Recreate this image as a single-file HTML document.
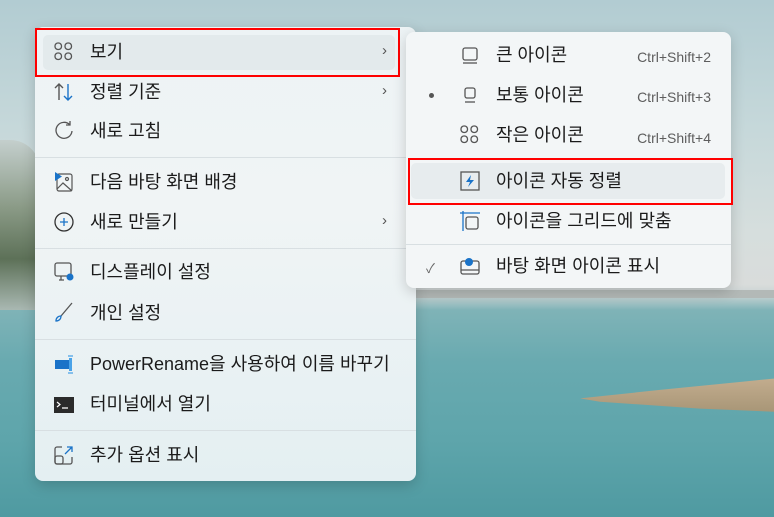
<!DOCTYPE html>
<html><head><meta charset="utf-8"><style>
*{margin:0;padding:0;box-sizing:border-box}
body{width:774px;height:517px;overflow:hidden;position:relative;font-family:"Liberation Sans","Noto Sans CJK KR",sans-serif;
background:linear-gradient(180deg,#b2ccd2 0%,#c6d8da 25%,#d6dedd 45%,#d9dcdb 55%,#c9d3d3 57%,#7fb3b7 60%,#69aab0 70%,#5ea5ab 85%,#4f9aa1 100%);}
.abs{position:absolute}
.menu{position:absolute;border-radius:8px;box-shadow:0 4px 14px rgba(0,0,0,.18);}
.m1{left:35px;top:27px;width:381px;height:454px;background:linear-gradient(180deg,#edf3f5,#f0f4f5 40%,#e8f1f3 80%,#e4eff2);}
.m2{left:406px;top:32px;width:325px;height:256px;background:#f3f6f7;}
.it{position:absolute;font-size:18px;color:#1b1b1b;line-height:20px;white-space:nowrap}
.sep{position:absolute;height:1px;background:#d8dfe2}
.sc{position:absolute;font-size:14px;color:#5d5d5d;line-height:16px;right:63px;text-align:right}
.ic{position:absolute}
.chev{position:absolute;font-size:15px;color:#555}
.red{position:absolute;border:2.5px solid #f00}
</style></head><body>
<div class="abs" style="left:0;top:140px;width:40px;height:170px;background:linear-gradient(180deg,#c4cfcd,#8a9a86 40%,#5d7158 70%,#a9b8b2);border-radius:0 30px 0 0"></div>
<div class="abs" style="left:400px;top:290px;width:374px;height:8px;background:#b3b9b7"></div>
<div class="abs" style="left:580px;top:378px;width:200px;height:34px;background:linear-gradient(180deg,#c3ad8e,#a89677);clip-path:polygon(0 60%,40% 35%,100% 0,100% 100%,60% 90%,10% 70%)"></div>

<div class="menu m1">
 <div class="abs" style="left:8px;top:8px;width:352px;height:35px;background:#e3eaec;border-radius:5px"></div>
 <div class="sep" style="left:0;top:130px;width:381px"></div>
 <div class="sep" style="left:0;top:221px;width:381px"></div>
 <div class="sep" style="left:0;top:312px;width:381px"></div>
 <div class="sep" style="left:0;top:403px;width:381px"></div>
</div>
<div class="red" style="left:35px;top:28px;width:365px;height:49px"></div>

<svg class="ic" style="left:52px;top:40px" width="24" height="24" fill="none" stroke="#555" stroke-width="1.3"><rect x="3" y="3" width="6.5" height="6.5" rx="3"/><rect x="13" y="3" width="6.5" height="6.5" rx="3"/><rect x="3" y="13" width="6.5" height="6.5" rx="3"/><rect x="13" y="13" width="6.5" height="6.5" rx="3"/></svg>
<div class="it" style="left:90px;top:42px">보기</div><div class="chev" style="left:382px;top:42px">›</div>
<svg class="ic" style="left:52px;top:80px" width="24" height="24" fill="none" stroke-width="1.4"><path d="M7 20V4M3 8l4-4 4 4" stroke="#555"/><path d="M16 4v16M12 16l4 4 4-4" stroke="#1a73c8"/></svg>
<div class="it" style="left:90px;top:82px">정렬 기준</div><div class="chev" style="left:382px;top:82px">›</div>
<svg class="ic" style="left:52px;top:119px" width="24" height="24" fill="none" stroke="#555" stroke-width="1.3"><path d="M18 6A8 8 0 1 0 20 12"/><path d="M18 2v4h-4"/></svg>
<div class="it" style="left:90px;top:121px">새로 고침</div>
<svg class="ic" style="left:52px;top:170px" width="24" height="24" fill="none" stroke="#555" stroke-width="1.2"><rect x="5" y="4" width="15" height="17" rx="2"/><path d="M5 19l6-6 9 8"/><circle cx="15" cy="9" r="1.5"/><path d="M3 2v9l7-4.5z" fill="#1a73c8" stroke="none"/></svg>
<div class="it" style="left:90px;top:172px">다음 바탕 화면 배경</div>
<svg class="ic" style="left:52px;top:210px" width="24" height="24" fill="none" stroke-width="1.3"><circle cx="12" cy="12" r="9" stroke="#333"/><path d="M12 8v8M8 12h8" stroke="#1a73c8"/></svg>
<div class="it" style="left:90px;top:212px">새로 만들기</div><div class="chev" style="left:382px;top:212px">›</div>
<svg class="ic" style="left:52px;top:260px" width="26" height="24" fill="none" stroke="#555" stroke-width="1.3"><rect x="3" y="3" width="16" height="13" rx="2"/><path d="M7 20h5M9 16v4"/><circle cx="18" cy="17" r="3.5" fill="#1a73c8" stroke="none"/></svg>
<div class="it" style="left:90px;top:262px">디스플레이 설정</div>
<svg class="ic" style="left:52px;top:300px" width="24" height="24" fill="none" stroke-width="1.3"><path d="M20 3L9 16" stroke="#555"/><path d="M9 16c-3 0-5 2-5 5 3 0 5-2 5-5z" stroke="#1a73c8"/></svg>
<div class="it" style="left:90px;top:303px">개인 설정</div>
<svg class="ic" style="left:52px;top:352px" width="24" height="24"><rect x="3" y="8" width="15" height="9" fill="#1a73c8"/><rect x="17" y="6" width="3" height="13" fill="#4aa3e8"/><path d="M16 4h5M16 21h5" stroke="#4aa3e8" stroke-width="1.3"/></svg>
<div class="it" style="left:90px;top:354px">PowerRename을 사용하여 이름 바꾸기</div>
<svg class="ic" style="left:52px;top:393px" width="24" height="24"><rect x="2" y="4" width="20" height="16" fill="#2b2b2b"/><path d="M5 9l3 2.5L5 14M10 15h6" stroke="#fff" stroke-width="1.2" fill="none"/></svg>
<div class="it" style="left:90px;top:394px">터미널에서 열기</div>
<svg class="ic" style="left:52px;top:443px" width="24" height="24" fill="none" stroke-width="1.3"><path d="M10 4H5a2 2 0 0 0-2 2v13a2 2 0 0 0 2 2h13a2 2 0 0 0 2-2v-5" stroke="#555"/><rect x="3" y="13" width="8" height="8" rx="2" stroke="#555"/><path d="M13 11l7-7M15 4h5v5" stroke="#1a73c8"/></svg>
<div class="it" style="left:90px;top:445px">추가 옵션 표시</div>

<div class="menu m2">
 <div class="abs" style="left:5px;top:131px;width:314px;height:36px;background:#e7ecee;border-radius:5px"></div>
 <div class="sep" style="left:0;top:212px;width:325px"></div>
</div>
<div class="red" style="left:408px;top:158px;width:325px;height:47px"></div>

<svg class="ic" style="left:458px;top:43px" width="24" height="24" fill="none" stroke="#555" stroke-width="1.3"><rect x="5" y="5" width="14" height="12" rx="2"/><path d="M5 20h14"/></svg>
<div class="it" style="left:496px;top:45px">큰 아이콘</div><div class="sc" style="top:49px">Ctrl+Shift+2</div>
<div class="abs" style="left:429px;top:93px;width:5px;height:5px;border-radius:50%;background:#555"></div>
<svg class="ic" style="left:458px;top:83px" width="24" height="24" fill="none" stroke="#555" stroke-width="1.3"><rect x="7" y="5" width="10" height="10" rx="2"/><path d="M7 19h10"/></svg>
<div class="it" style="left:496px;top:85px">보통 아이콘</div><div class="sc" style="top:89px">Ctrl+Shift+3</div>
<svg class="ic" style="left:458px;top:123px" width="24" height="24" fill="none" stroke="#555" stroke-width="1.3"><rect x="3" y="3" width="6.5" height="6.5" rx="3"/><rect x="13" y="3" width="6.5" height="6.5" rx="3"/><rect x="3" y="13" width="6.5" height="6.5" rx="3"/><rect x="13" y="13" width="6.5" height="6.5" rx="3"/></svg>
<div class="it" style="left:496px;top:125px">작은 아이콘</div><div class="sc" style="top:130px">Ctrl+Shift+4</div>
<svg class="ic" style="left:458px;top:169px" width="24" height="24" fill="none" stroke="#555" stroke-width="1.3"><rect x="3" y="3" width="18" height="18"/><path d="M13 6l-5 7h4l-2 5 6-7h-4z" fill="#1a73c8" stroke="none"/></svg>
<div class="it" style="left:496px;top:171px">아이콘 자동 정렬</div>
<svg class="ic" style="left:458px;top:209px" width="24" height="24" fill="none" stroke-width="1.3"><path d="M2 4h20M5 2v20" stroke="#1a73c8"/><rect x="8" y="8" width="12" height="12" rx="2" stroke="#555"/></svg>
<div class="it" style="left:496px;top:211px">아이콘을 그리드에 맞춤</div>
<div class="abs" style="left:426px;top:258px;font-size:13px;color:#666">✓</div>
<svg class="ic" style="left:458px;top:254px" width="24" height="24" fill="none" stroke="#555" stroke-width="1.3"><rect x="3" y="7" width="18" height="13" rx="2"/><path d="M3 16h18"/><circle cx="11" cy="8" r="4" fill="#1a73c8" stroke="none"/></svg>
<div class="it" style="left:496px;top:256px">바탕 화면 아이콘 표시</div>
</body></html>
